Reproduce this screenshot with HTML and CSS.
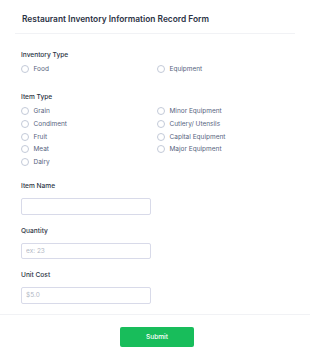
FILE: index.html
```html
<!DOCTYPE html>
<html>
<head>
<meta charset="utf-8">
<link rel="stylesheet" href="styles.css">
</head>
<body>
<div class="page">
  <div class="header">
    <h1 class="title">Restaurant Inventory Information Record Form</h1>
  </div>
  <div class="content">
    <div class="field f-inv">
      <div class="label">Inventory Type</div>
      <div class="options">
        <div class="opt"><span class="radio"></span>Food</div>
        <div class="opt"><span class="radio"></span>Equipment</div>
      </div>
    </div>
    <div class="field f-item">
      <div class="label">Item Type</div>
      <div class="options two">
        <div class="col">
          <div class="opt"><span class="radio"></span>Grain</div>
          <div class="opt"><span class="radio"></span>Condiment</div>
          <div class="opt"><span class="radio"></span>Fruit</div>
          <div class="opt"><span class="radio"></span>Meat</div>
          <div class="opt"><span class="radio"></span>Dairy</div>
        </div>
        <div class="col">
          <div class="opt"><span class="radio"></span>Minor Equipment</div>
          <div class="opt"><span class="radio"></span>Cutlery/ Utensils</div>
          <div class="opt"><span class="radio"></span>Capital Equipment</div>
          <div class="opt"><span class="radio"></span>Major Equipment</div>
        </div>
      </div>
    </div>
    <div class="field f-name">
      <div class="label">Item Name</div>
      <input class="input" type="text">
    </div>
    <div class="field f-text">
      <div class="label">Quantity</div>
      <input class="input" type="text" placeholder="ex: 23">
    </div>
    <div class="field f-text">
      <div class="label">Unit Cost</div>
      <input class="input" type="text" placeholder="$5.0">
    </div>
  </div>
  <div class="footer">
    <button class="submit">Submit</button>
  </div>
</div>
</body>
</html>
```
FILE: styles.css
```css
html, body {
  margin: 0;
  padding: 0;
  background: #ffffff;
}
body {
  font-family: Inter, "Noto Sans", sans-serif;
  color: #2c3345;
}
.page {
  width: 310px;
}
.header {
  margin: 0 15px;
  padding: 13px 7px 8px;
  border-bottom: 1px solid #f1f2f5;
}
.title {
  margin: 0;
  font-size: 8.4px;
  line-height: 12px;
  font-weight: 600;
  color: #2c3345;
}
.content {
  padding: 0 21px 10px;
}
.field {
  display: flex;
  flex-direction: column;
}
.f-inv { margin-top: 16px; }
.f-item { margin-top: 19px; }
.f-name { margin-top: 15px; }
.f-text { margin-top: 11px; }
.label {
  font-size: 6.6px;
  line-height: 10px;
  font-weight: 500;
  color: #2c3345;
  margin-bottom: 5px;
}
.options {
  display: grid;
  grid-template-columns: 136px 1fr;
  row-gap: 4.75px;
}
.options.two {
  row-gap: 0;
}
.col {
  display: flex;
  flex-direction: column;
  gap: 4.75px;
}
.opt {
  display: flex;
  align-items: center;
  gap: 4.5px;
  height: 8px;
  font-size: 6.5px;
  color: #57647e;
  white-space: nowrap;
}
.radio {
  width: 8px;
  height: 8px;
  box-sizing: border-box;
  border: 1px solid #c3cad8;
  border-radius: 50%;
  flex: none;
  background: #fff;
}
.input {
  width: 130px;
  height: 16.5px;
  box-sizing: border-box;
  border: 1px solid #d8dae9;
  border-radius: 2px;
  margin: 2px 0 0;
  padding: 0 4px;
  font-family: Inter, sans-serif;
  font-size: 6.5px;
  color: #2c3345;
  outline: none;
}
.input::placeholder {
  color: #b2b7c4;
}
.footer {
  border-top: 1px solid #f1f2f5;
  display: flex;
  justify-content: center;
  padding: 12px 0 0 4px;
}
.submit {
  width: 74px;
  height: 20px;
  border: none;
  border-radius: 2px;
  background: #18bd5b;
  color: #ffffff;
  font-family: Inter, sans-serif;
  font-size: 6.6px;
  font-weight: 500;
  cursor: pointer;
}
```
